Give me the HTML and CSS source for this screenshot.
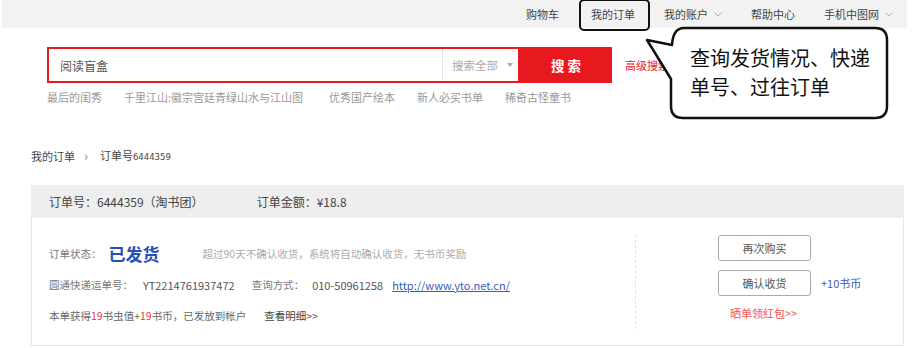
FILE: index.html
```html
<!DOCTYPE html>
<html lang="zh-CN">
<head>
  <meta charset="UTF-8">
  <title>我的订单 - 订单详情</title>
  <link rel="stylesheet" href="styles.css">
</head>
<body>
  <div class="page">
    <!-- top links -->
    <nav class="topbar">
      <a class="top-link">购物车</a>
      <a class="top-link top-link--marked">我的订单</a>
      <a class="top-link">我的账户<svg class="caret" viewBox="0 0 8 5"><path d="M0.5 0.5 L4 4 L7.5 0.5" /></svg></a>
      <a class="top-link">帮助中心</a>
      <a class="top-link">手机中图网<svg class="caret" viewBox="0 0 8 5"><path d="M0.5 0.5 L4 4 L7.5 0.5" /></svg></a>
    </nav>

    <!-- search -->
    <div class="search">
      <div class="search-box">
        <span class="search-input">阅读盲盒</span>
        <span class="search-scope">搜索全部<i class="scope-arrow"></i></span>
      </div>
      <button class="search-btn">搜 索</button>
      <a class="search-adv">高级搜索</a>
    </div>
    <div class="hotwords">
      <a>最后的闺秀</a>
      <a class="hot-long">千里江山:徽宗宫廷青绿山水与江山图</a>
      <a>优秀国产绘本</a>
      <a>新人必买书单</a>
      <a>稀奇古怪童书</a>
    </div>

    <!-- breadcrumb -->
    <div class="crumb">
      <a>我的订单</a>
      <span class="crumb-sep">›</span>
      <span>订单号<small class="crumb-no">6444359</small></span>
    </div>

    <!-- order -->
    <div class="order">
      <div class="order-head">
        <span>订单号：6444359（淘书团）</span>
        <span class="order-sum">订单金额：¥18.8</span>
      </div>
      <div class="order-body">
        <div class="order-info">
          <div class="info-row">
            <span class="label">订单状态：</span>
            <strong class="status">已发货</strong>
            <span class="hint">超过90天不确认收货，系统将自动确认收货，无书币奖励</span>
          </div>
          <div class="info-row">
            <span class="label">圆通快递运单号：</span>
            <span class="num">YT2214761937472</span>
            <span class="label label--gap">查询方式：</span>
            <span class="num num--tel">010-50961258</span>
            <a class="track-link">http://www.yto.net.cn/</a>
          </div>
          <div class="info-row">
            <span>本单获得<em class="hl">19</em>书虫值+<em class="hl">19</em>书币，已发放到帐户</span>
            <a class="detail-link">查看明细&gt;&gt;</a>
          </div>
        </div>
        <div class="order-actions">
          <button class="btn">再次购买</button>
          <div class="btn-line">
            <button class="btn">确认收货</button>
            <span class="bonus">+10书币</span>
          </div>
          <a class="share-link">晒单领红包&gt;&gt;</a>
        </div>
      </div>
    </div>

    <!-- annotation callout -->
    <svg class="callout-shape" viewBox="0 0 917 130">
      <path d="M684 28 H875 Q887 28 887 40 V106 Q887 118 875 118 H683 Q671 118 671 106 V79 L647 40 L672 45 Q673 28 684 28 Z" />
    </svg>
    <div class="callout-text">查询发货情况、快递<br>单号、过往订单</div>
  </div>
</body>
</html>
```

FILE: styles.css
```css
/* base */
body {
  margin: 0;
  background: #fff;
  color: #666;
  font-family: "Noto Sans CJK SC", "Microsoft YaHei", sans-serif;
  font-size: 11px;
}

a { color: inherit; text-decoration: none; }
em { font-style: normal; }

.page {
  position: relative;
  width: 917px;
  height: 348px;
  overflow: hidden;
}

/* top links */
.topbar {
  display: flex;
  justify-content: flex-end;
  align-items: center;
  gap: 29px;
  height: 28px;
  margin: 0 10px 0 2px;
  padding-right: 14px;
  background: #f2f2f2;
  color: #444;
  font-size: 11px;
}

.top-link {
  position: relative;
  display: flex;
  align-items: center;
  line-height: 28px;
}

.top-link:first-child { margin-right: 3px; }

.top-link--marked::after {
  content: "";
  position: absolute;
  left: -12px;
  right: -15px;
  top: -1px;
  bottom: -3px;
  border: 2.5px solid #111;
  border-radius: 5px;
}

.caret {
  width: 8px;
  height: 5px;
  margin-left: 6px;
  fill: none;
  stroke: #b5b5b5;
  stroke-width: 1;
}

/* search */
.search {
  display: flex;
  align-items: center;
  margin: 19px 0 0 47px;
  height: 36px;
}

.search-box {
  display: flex;
  align-items: center;
  box-sizing: border-box;
  width: 473px;
  height: 36px;
  border: 2px solid #e8191e;
  background: #fff;
}

.search-input {
  flex: 1;
  padding-left: 11px;
  color: #555;
  font-size: 12px;
}

.search-scope {
  display: flex;
  align-items: center;
  box-sizing: border-box;
  width: 76px;
  height: 100%;
  padding-left: 9px;
  border-left: 1px solid #e2e2e2;
  color: #aaa;
  font-size: 11.5px;
}

.scope-arrow {
  margin-left: 9px;
  border-top: 4px solid #aaa;
  border-left: 3.5px solid transparent;
  border-right: 3.5px solid transparent;
}

.search-btn {
  width: 92px;
  height: 36px;
  border: 0;
  background: #e8191e;
  color: #fff;
  font-family: inherit;
  font-size: 13.5px;
  font-weight: 700;
}

.search-adv {
  margin-left: 13px;
  color: #e8191e;
  font-size: 11px;
}

.hotwords {
  display: flex;
  gap: 22px;
  margin: 7px 0 0 47px;
  line-height: 14px;
  color: #999;
}

.hot-long { padding-right: 4px; }

/* breadcrumb */
.crumb {
  display: flex;
  align-items: center;
  margin: 43px 0 0 31px;
  line-height: 16px;
  color: #444;
}

.crumb-sep {
  margin: 0 12px 0 9px;
  color: #888;
  font-size: 13px;
}

.crumb-no {
  font-family: "DejaVu Sans", sans-serif;
  font-size: 8.5px;
}

/* order */
.order {
  width: 873px;
  margin: 20px 0 0 31px;
}

.order-head {
  display: flex;
  align-items: center;
  height: 33px;
  padding-left: 18px;
  background: #eeeeee;
  color: #444;
  font-size: 12px;
}

.order-sum {
  margin-left: 53px;
}

.order-body {
  display: flex;
  box-sizing: border-box;
  height: 128px;
  border: 1px solid #e6e6e6;
  border-top: 0;
}

.order-info {
  box-sizing: border-box;
  width: 603px;
  padding: 20px 0 0 17px;
  font-size: 10.5px;
}

.info-row {
  display: flex;
  align-items: center;
  height: 31px;
  white-space: nowrap;
}

.label { color: #777; }
.label--gap { margin-left: 17px; }

.status {
  margin: 0 43px 0 7px;
  color: #2b4db6;
  font-size: 17px;
  font-weight: 700;
}

.hint {
  color: #aaa;
  font-size: 10.5px;
}

.num {
  margin-left: 10px;
  color: #555;
  font-size: 11px;
}

.num--tel { margin-left: 8px; }

.track-link {
  margin-left: 9px;
  color: #3a5bbf;
  font-size: 11px;
  text-decoration: underline;
}

.hl { color: #f0324b; }

.detail-link {
  margin-left: 18px;
  color: #444;
}

.order-actions {
  display: flex;
  flex-direction: column;
  align-items: flex-start;
  box-sizing: border-box;
  height: 94px;
  margin-top: 17px;
  padding-left: 82px;
  border-left: 1px dashed #e2e2e2;
}

.btn {
  box-sizing: border-box;
  width: 93px;
  height: 26px;
  border: 1.5px solid #aaa;
  border-radius: 3px;
  background: #fff;
  color: #555;
  font-family: inherit;
  font-size: 11px;
}

.btn-line {
  display: flex;
  align-items: center;
  margin-top: 9px;
}

.bonus {
  margin-left: 10px;
  color: #3a5bbf;
}

.share-link {
  margin: 10px 0 0 12px;
  line-height: 14px;
  color: #f05454;
}

/* callout overlay */
.callout-shape {
  position: absolute;
  left: 0;
  top: 0;
  width: 917px;
  height: 130px;
  pointer-events: none;
}

.callout-shape path {
  fill: #fff;
  stroke: #111;
  stroke-width: 2.5;
  stroke-linejoin: round;
}

.callout-text {
  position: absolute;
  left: 690px;
  top: 43px;
  color: #111;
  font-size: 20px;
  line-height: 29px;
  white-space: nowrap;
}
```
